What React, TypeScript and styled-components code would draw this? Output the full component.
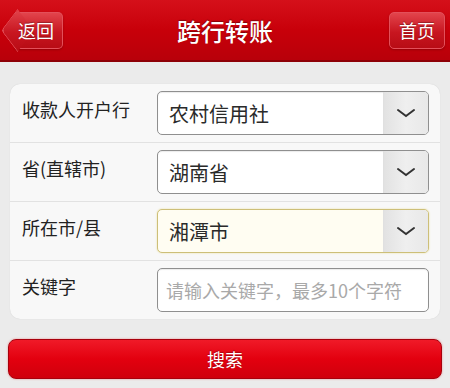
import React from 'react';
import styled, { createGlobalStyle } from 'styled-components';

const GlobalStyle = createGlobalStyle`
  html, body {
    margin: 0;
    padding: 0;
    background: #ebebeb;
    font-family: "Noto Sans CJK SC", "Noto Sans", sans-serif;
  }
`;

const Page = styled.div`
  width: 450px;
  height: 388px;
  background: #ebebeb;
  overflow: hidden;
`;

const Header = styled.header`
  height: 60px;
  display: flex;
  align-items: center;
  justify-content: space-between;
  padding: 0 5px 0 4px;
  background: linear-gradient(to bottom, #d5101a 0%, #c8000a 50%, #b8000a 100%);
  border-bottom: 2px solid #8e0007;
  position: relative;
`;

const Title = styled.h1`
  position: absolute;
  left: 0;
  right: 0;
  top: 0;
  bottom: 0;
  margin: 0;
  display: flex;
  align-items: center;
  justify-content: center;
  color: #fff;
  font-size: 24px;
  font-weight: 500;
  text-shadow: 0 -1px 1px rgba(0, 0, 0, 0.35);
  pointer-events: none;
`;

const NavButton = styled.button<{ $back?: boolean }>`
  position: relative;
  z-index: 1;
  height: 37px;
  padding: ${(p) => (p.$back ? '0 8px 0 2px' : '0 9px')};
  margin-left: ${(p) => (p.$back ? '11px' : '0')};
  border: 1px solid #e3505a;
  border-left-color: ${(p) => (p.$back ? 'transparent' : '#e3505a')};
  border-radius: ${(p) => (p.$back ? '0 5px 5px 0' : '5px')};
  background: linear-gradient(to bottom, #e2444c 0%, #c81620 55%, #b80c15 100%);
  color: #fff;
  font-family: inherit;
  font-size: 18px;
  line-height: 35px;
  text-shadow: 0 -1px 1px rgba(0, 0, 0, 0.3);
  box-shadow: 0 1px 2px rgba(90, 0, 0, 0.4);

  ${(p) =>
    p.$back &&
    `
    &::before {
      content: '';
      position: absolute;
      left: -12px;
      top: 4px;
      width: 26px;
      height: 26px;
      transform: rotate(45deg) skew(8deg, 8deg);
      border-left: 1px solid #e3505a;
      border-bottom: 1px solid #e3505a;
      border-radius: 0 0 0 4px;
      background: linear-gradient(135deg, #e2444c 0%, #c81620 55%, #b80c15 100%);
      z-index: -1;
    }
  `}
`;

const Card = styled.div`
  margin: 22px 10px 0 10px;
  background: #f8f8f8;
  border-radius: 10px;
  box-shadow: 0 0 1px rgba(0, 0, 0, 0.15);
  overflow: hidden;
`;

const Row = styled.div`
  height: 58px;
  display: flex;
  align-items: center;
  padding: 0 11px 0 12px;
  border-top: 1px solid #e2e2e2;

  &:first-child {
    border-top: none;
  }
`;

const Label = styled.span`
  width: 135px;
  flex-shrink: 0;
  color: #222;
  font-size: 18px;
  margin-top: -8px;
`;

const Field = styled.div<{ $focused?: boolean }>`
  flex: 1;
  height: 42px;
  display: flex;
  align-items: stretch;
  border: 1px solid ${(p) => (p.$focused ? '#cdbf78' : '#8f8f8f')};
  border-radius: 5px;
  background: ${(p) => (p.$focused ? '#fffdf2' : '#fff')};
  box-shadow: ${(p) => (p.$focused ? '0 0 2px #e8dc9c' : 'inset 0 1px 1px rgba(0,0,0,0.08)')};
  overflow: hidden;
`;

const FieldText = styled.span<{ $placeholder?: boolean }>`
  flex: 1;
  display: flex;
  align-items: center;
  padding-left: ${(p) => (p.$placeholder ? '8px' : '11px')};
  color: ${(p) => (p.$placeholder ? '#a9a9a9' : '#2a2a2a')};
  font-size: ${(p) => (p.$placeholder ? '18px' : '20px')};
  white-space: nowrap;
`;

const ArrowBox = styled.span`
  width: 44px;
  display: flex;
  align-items: center;
  justify-content: center;
  background: linear-gradient(to right, #e2e2e2 0%, #efefef 50%, #e8e8e8 100%);
  border-left: 1px solid #e0e0e0;
`;

const SearchButton = styled.button`
  display: block;
  margin: 20px 8px 0 8px;
  width: calc(100% - 16px);
  height: 40px;
  border: 1px solid #a8000c;
  border-radius: 8px;
  background: linear-gradient(to bottom, #f01a28 0%, #e3000f 50%, #cf000c 100%);
  color: #fff;
  font-family: inherit;
  font-size: 18px;
  text-shadow: 0 -1px 1px rgba(0, 0, 0, 0.3);
  box-shadow: 0 0 2px rgba(230, 60, 60, 0.6);
`;

const Chevron = () => (
  <svg width="20" height="10" viewBox="0 0 20 10">
    <path d="M2 2 L10 8 L18 2" fill="none" stroke="#333" strokeWidth="2" strokeLinecap="round" />
  </svg>
);

interface SelectProps {
  value: string;
  focused?: boolean;
}

const Select: React.FC<SelectProps> = ({ value, focused }) => (
  <Field $focused={focused}>
    <FieldText>{value}</FieldText>
    <ArrowBox>
      <Chevron />
    </ArrowBox>
  </Field>
);

const App: React.FC = () => {
  return (
    <Page>
      <GlobalStyle />
      <Header>
        <NavButton $back>返回</NavButton>
        <Title>跨行转账</Title>
        <NavButton>首页</NavButton>
      </Header>
      <Card>
        <Row>
          <Label>收款人开户行</Label>
          <Select value="农村信用社" />
        </Row>
        <Row>
          <Label>省(直辖市)</Label>
          <Select value="湖南省" />
        </Row>
        <Row>
          <Label>所在市/县</Label>
          <Select value="湘潭市" focused />
        </Row>
        <Row>
          <Label>关键字</Label>
          <Field>
            <FieldText $placeholder>请输入关键字，最多10个字符</FieldText>
          </Field>
        </Row>
      </Card>
      <SearchButton>搜索</SearchButton>
    </Page>
  );
};

export default App;
